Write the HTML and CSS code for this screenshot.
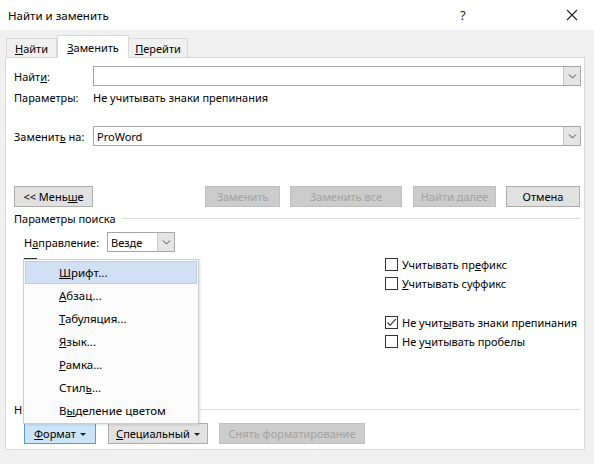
FILE: index.html
```html
<!DOCTYPE html>
<html lang="ru">
<head>
<meta charset="utf-8">
<title>Найти и заменить</title>
<link rel="stylesheet" href="styles.css">
</head>
<body>
<div class="dialog">
  <header class="titlebar">
    <span class="title">Найти и заменить</span>
    <span class="help">?</span>
    <svg class="close" width="12" height="12" viewBox="0 0 12 12"><path d="M1 1L11 11M11 1L1 11" stroke="#222" stroke-width="1.1" fill="none"/></svg>
  </header>

  <nav class="tabs">
    <span class="tab"><span><u>Н</u>айти</span></span>
    <span class="tab active"><span><u>З</u>аменить</span></span>
    <span class="tab"><span><u>П</u>ерейти</span></span>
  </nav>

  <section class="panel">
    <div class="field">
      <label class="label">Найт<u>и</u>:</label>
      <div class="combo"><span class="combo-text"></span><span class="combo-btn"><svg width="9" height="5" viewBox="0 0 9 5"><path d="M1 0.5L4.5 4L8 0.5" stroke="#444" fill="none"/></svg></span></div>
    </div>
    <div class="params">
      <span class="label">Параметры:</span>
      <span>Не учитывать знаки препинания</span>
    </div>
    <div class="field replace">
      <label class="label">Заменит<u>ь</u> на:</label>
      <div class="combo"><span class="combo-text">ProWord</span><span class="combo-btn"><svg width="9" height="5" viewBox="0 0 9 5"><path d="M1 0.5L4.5 4L8 0.5" stroke="#444" fill="none"/></svg></span></div>
    </div>

    <div class="actions">
      <button class="btn w-less"><span>&lt;&lt; Мень<u>ш</u>е</span></button>
      <span class="spacer"></span>
      <button class="btn disabled w-repl">Заменить</button>
      <button class="btn disabled w-all">Заменить все</button>
      <button class="btn disabled w-next">Найти далее</button>
      <button class="btn w-cancel">Отмена</button>
    </div>

    <div class="group-head"><span>Параметры поиска</span><span class="rule"></span></div>

    <div class="direction">
      <span class="dir-label">Н<u>а</u>правление:</span>
      <div class="select"><span class="combo-text">Везде</span><span class="combo-btn"><svg width="9" height="5" viewBox="0 0 9 5"><path d="M1 0.5L4.5 4L8 0.5" stroke="#444" fill="none"/></svg></span></div>
    </div>

    <div class="options">
      <div class="col left">
        <span class="check"><span class="box"></span></span>
        <span class="check"><span class="box"></span></span>
        <span class="check"><span class="box"></span></span>
        <span class="check"><span class="box"></span></span>
        <span class="check"><span class="box"></span></span>
      </div>
      <div class="col right">
        <label class="check"><span class="box"></span><span>Учитывать пр<u>е</u>фикс</span></label>
        <label class="check"><span class="box"></span><span><u>У</u>читывать суффикс</span></label>
        <span class="check-gap"></span>
        <label class="check"><span class="box checked"><svg width="11" height="11" viewBox="0 0 11 11"><path d="M1.5 5.5L4.2 8.3L9.6 2.2" stroke="#222" stroke-width="1.1" fill="none"/></svg></span><span>Не учит<u>ы</u>вать знаки препинания</span></label>
        <label class="check"><span class="box"></span><span>Не у<u>ч</u>итывать пробелы</span></label>
      </div>
    </div>

    <div class="group-head bottom-head"><span>Н</span><span class="rule"></span></div>

    <div class="bottom-actions">
      <button class="btn pressed w-fmt"><span><u>Ф</u>ормат</span><span class="caret"></span></button>
      <button class="btn w-spec"><span><u>С</u>пециальный</span><span class="caret"></span></button>
      <button class="btn disabled w-clear">Снять форматирование</button>
    </div>

    <ul class="menu">
      <li class="item hot"><u>Ш</u>рифт...</li>
      <li class="item"><u>А</u>бзац...</li>
      <li class="item"><u>Т</u>абуляция...</li>
      <li class="item"><u>Я</u>зык...</li>
      <li class="item"><u>Р</u>амка...</li>
      <li class="item">Стил<u>ь</u>...</li>
      <li class="item">В<u>ы</u>деление цветом</li>
    </ul>
  </section>
</div>
</body>
</html>
```

FILE: styles.css
```css
* { box-sizing: border-box; }

html, body {
  margin: 0;
  padding: 0;
}

body {
  width: 594px;
  height: 464px;
  overflow: hidden;
  background: #f0f0f0;
  font-family: "Segoe UI", "Noto Sans", "Open Sans", sans-serif;
  font-size: 11px;
  color: #000;
}

u { text-decoration: underline; text-underline-offset: 1px; }

.dialog {
  width: 594px;
  height: 464px;
  display: flex;
  flex-direction: column;
}

/* title bar */
.titlebar {
  height: 30px;
  background: #fff;
  display: flex;
  align-items: center;
  padding-left: 8px;
}
.title { flex: 1; font-size: 11.5px; }
.help { width: 12px; margin-right: 94px; font-size: 13px; color: #222; }
.close { margin-right: 16px; }

/* tabs */
.tabs {
  display: flex;
  align-items: flex-end;
  padding-left: 6px;
  margin-top: 5px;
  height: 22px;
  position: relative;
  z-index: 1;
}
.tab {
  height: 19px;
  border: 1px solid #d9d9d9;
  border-bottom: none;
  background: #f0f0f0;
  display: flex;
  align-items: center;
  justify-content: center;
}
.tab:first-child { width: 51px; }
.tab.active {
  width: 72px;
  height: 23px;
  background: #fff;
  margin-bottom: -1px;
}
.tab:last-child { width: 59px; border-left: none; }

/* main panel */
.panel {
  position: relative;
  margin-left: 5px;
  width: 580px;
  height: 393px;
  background: #fff;
  border: 1px solid #d9d9d9;
  padding: 8px 3px 0 8px;
}

.label { width: 79px; flex: none; }

.field {
  display: flex;
  align-items: center;
  height: 20px;
}
.field.replace { margin-top: 18px; }

.combo, .select {
  flex: 1;
  height: 20px;
  border: 1px solid #a6a6a6;
  background: #fff;
  display: flex;
  align-items: center;
}
.combo-text { flex: 1; padding-left: 3px; }
.combo-btn {
  width: 17px;
  height: 18px;
  background: #e5e5e5;
  border-left: 1px solid #c8c8c8;
  display: flex;
  align-items: center;
  justify-content: center;
}

.params {
  display: flex;
  align-items: center;
  height: 22px;
}

/* buttons */
.actions {
  display: flex;
  align-items: center;
  margin-top: 40px;
  gap: 10px;
  padding-right: 1px;
}
.spacer { flex: 1; }
.btn {
  height: 21px;
  font-family: inherit;
  font-size: 11px;
  color: #000;
  background: #e1e1e1;
  border: 1px solid #adadad;
  padding: 0;
  display: flex;
  align-items: center;
  justify-content: center;
  flex: none;
}
.btn.disabled {
  background: #cccccc;
  border-color: #bfbfbf;
  color: #a3a3a3;
}
.btn.pressed {
  background: #cce4f7;
  border-color: #5a9bd5;
}
.w-less { width: 79px; }
.w-repl { width: 75px; }
.w-all { width: 112px; }
.w-next { width: 83px; margin-left: 1px; }
.w-cancel { width: 74px; }

/* group headers */
.group-head {
  display: flex;
  align-items: center;
  height: 20px;
  margin-top: 1px;
  margin-right: 1px;
}
.group-head .rule {
  flex: 1;
  height: 1px;
  background: #dcdcdc;
  margin-left: 6px;
}

.direction {
  display: flex;
  align-items: center;
  height: 20px;
  margin-top: 4px;
  padding-left: 10px;
}
.dir-label { width: 83px; flex: none; }
.select { flex: none; width: 68px; }

/* checkbox columns */
.options {
  display: flex;
  margin-top: 3px;
  padding-left: 10px;
}
.col { display: flex; flex-direction: column; }
.col.left { width: 361px; flex: none; }
.col.right { flex: 1; }
.check {
  display: flex;
  align-items: center;
  height: 19px;
  white-space: nowrap;
}
.check-gap { height: 20px; }
.box {
  width: 13px;
  height: 13px;
  border: 1px solid #333;
  background: #fff;
  margin-right: 4px;
  flex: none;
  display: flex;
  align-items: center;
  justify-content: center;
}

.bottom-head { margin-top: 51px; height: 14px; }

.bottom-actions {
  display: flex;
  gap: 12px;
  margin-top: 7px;
  padding-left: 10px;
}
.w-fmt { width: 72px; }
.w-spec { width: 100px; }
.w-clear { width: 146px; margin-left: -1px; }
.caret {
  width: 0;
  height: 0;
  border-left: 3px solid transparent;
  border-right: 3px solid transparent;
  border-top: 3px solid #222;
  margin-left: 4px;
  margin-top: 1px;
}

/* format popup menu */
.menu {
  position: absolute;
  left: 17px;
  top: 201px;
  width: 176px;
  margin: 0;
  padding: 1px;
  list-style: none;
  background: #fbfbfb;
  border: 1px solid #cccccc;
  box-shadow: 1px 1px 2px rgba(0, 0, 0, 0.12);
  font-size: 11.5px;
}
.item {
  height: 23px;
  line-height: 21px;
  padding-left: 33px;
  border: 1px solid transparent;
}
.item.hot {
  background: #d1e0f4;
  border-color: #b6cdec;
}
```
